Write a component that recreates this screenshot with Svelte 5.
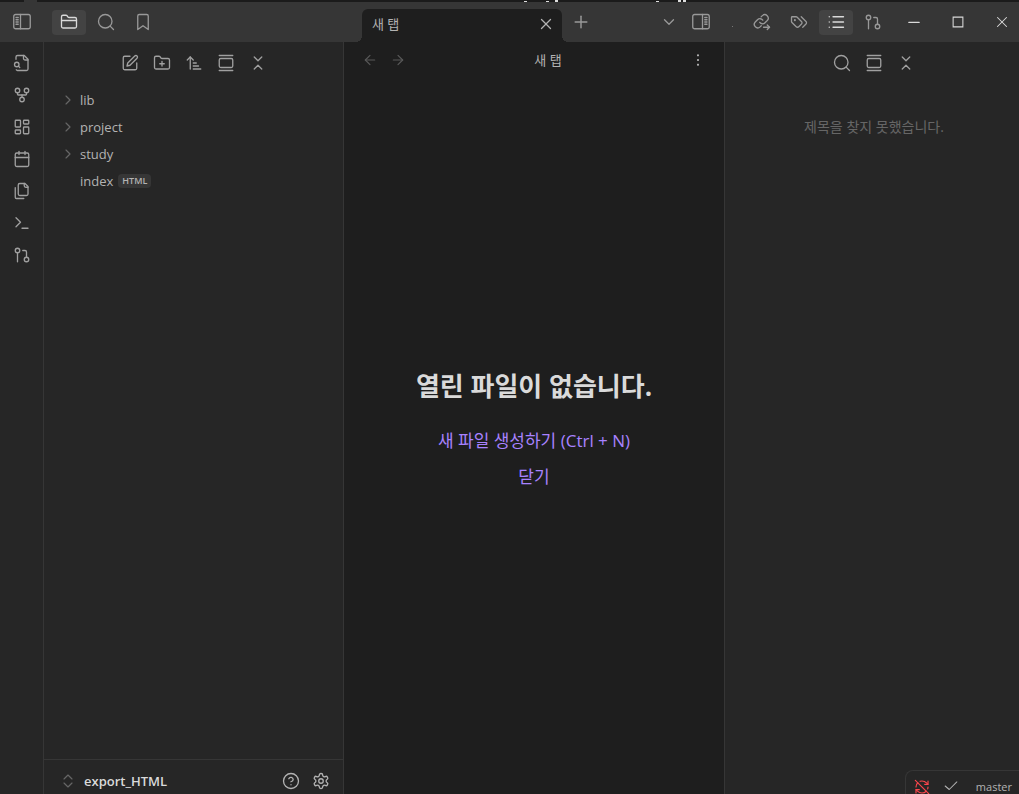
<script>
	// circles and rects are written as paths so every icon is just a list of d strings
	const folder =
		'M20 20a2 2 0 0 0 2-2V8a2 2 0 0 0-2-2h-7.9a2 2 0 0 1-1.69-.9L9.6 3.9A2 2 0 0 0 7.93 3H4a2 2 0 0 0-2 2v13a2 2 0 0 0 2 2Z';
	const circle = (x, y, r) => `M${x - r} ${y}a${r} ${r} 0 1 0 ${r * 2} 0a${r} ${r} 0 1 0 ${-r * 2} 0`;
	const rect = (x, y, w, h, r) =>
		`M${x + r} ${y}h${w - 2 * r}a${r} ${r} 0 0 1 ${r} ${r}v${h - 2 * r}a${r} ${r} 0 0 1 ${-r} ${r}h${2 * r - w}a${r} ${r} 0 0 1 ${-r} ${-r}v${2 * r - h}a${r} ${r} 0 0 1 ${r} ${-r}z`;

	const icons = {
		sidebarLeft: [rect(1, 2, 22, 19, 2.5), 'M10 2v19', 'M4 6h3M4 9h3M4 12h3M4 15h3'],
		sidebarRight: [rect(1, 2, 22, 19, 2.5), 'M14 2v19', 'M17 6h3M17 9h3M17 12h3M17 15h3'],
		folder: [folder, 'M2 10h20'],
		folderPlus: [folder, 'M12 10v6', 'M9 13h6'],
		search: [circle(11, 11, 9), 'm22 22-4.5-4.5'],
		bookmark: ['m19 22-7-5-7 5V4a2 2 0 0 1 2-2h10a2 2 0 0 1 2 2z'],
		fileSearch: [
			'M14 2v4a2 2 0 0 0 2 2h4',
			'M4.3 21a2 2 0 0 0 1.7 1h12a2 2 0 0 0 2-2V7l-5-5H6a2 2 0 0 0-2 2v3',
			'm9 18-1.5-1.5',
			circle(5, 14, 3)
		],
		fork: [circle(12, 18, 3), circle(6, 6, 3), circle(18, 6, 3), 'M18 9v2c0 .6-.4 1-1 1H7c-.6 0-1-.4-1-1V9', 'M12 12v3'],
		dashboard: [rect(3, 3, 7, 9, 1), rect(14, 3, 7, 5, 1), rect(14, 12, 7, 9, 1), rect(3, 16, 7, 5, 1)],
		calendar: ['M8 2v4', 'M16 2v4', rect(3, 4, 18, 18, 2), 'M3 10h18'],
		copy: [
			'M20 7h-3a2 2 0 0 1-2-2V2',
			'M9 18a2 2 0 0 1-2-2V4a2 2 0 0 1 2-2h7l4 4v10a2 2 0 0 1-2 2Z',
			'M3 7.6v12.8A1.6 1.6 0 0 0 4.6 22h9.8'
		],
		terminal: ['m4 17 6-6-6-6', 'M12 19h8'],
		pull: [circle(18, 18, 3), circle(6, 6, 3), 'M13 6h3a2 2 0 0 1 2 2v7', 'M6 9v12'],
		edit: [
			'M12 3H5a2 2 0 0 0-2 2v14a2 2 0 0 0 2 2h14a2 2 0 0 0 2-2v-7',
			'M18.375 2.625a2.121 2.121 0 1 1 3 3L12 15l-4 1 1-4Z'
		],
		sort: ['m3 8 4-4 4 4', 'M7 4v16', 'M11 12h4', 'M11 16h7', 'M11 20h10'],
		gallery: ['M3 2h18', rect(3, 6, 18, 12, 2), 'M3 22h18'],
		collapse: ['m7 20 5-5 5 5', 'm7 4 5 5 5-5'],
		updown: ['m6 15 6 6 6-6', 'm6 9 6-6 6 6'],
		close: ['M18 6 6 18', 'm6 6 12 12'],
		plus: ['M5 12h14', 'M12 5v14'],
		down: ['m6 9 6 6 6-6'],
		right: ['m9 18 6-6-6-6'],
		back: ['m12 19-7-7 7-7', 'M19 12H5'],
		forward: ['M5 12h14', 'm12 5 7 7-7 7'],
		more: [circle(12, 12, 0.7), circle(12, 5, 0.7), circle(12, 19, 0.7)],
		links: [
			'M9 12.5a4.6 4.6 0 0 0 7 .5l3-3a4.6 4.6 0 0 0-6.5-6.5l-1.7 1.7',
			'M13 9.5a4.6 4.6 0 0 0-7-.5l-3 3a4.6 4.6 0 0 0 6.5 6.5l1.5-1.5',
			'M14 19h8',
			'm19 16 3 3-3 3'
		],
		tags: [
			'm15 5 6.3 6.3a2.4 2.4 0 0 1 0 3.4L17 19',
			'M9.6 5.6A2 2 0 0 0 8.2 5H3a1 1 0 0 0-1 1v5.2a2 2 0 0 0 .6 1.4l5.7 5.7a2.4 2.4 0 0 0 3.4 0l3.6-3.6a2.4 2.4 0 0 0 0-3.4z',
			circle(6.5, 9.5, 0.5)
		],
		list: ['M8 5h14', 'M8 12h14', 'M8 19h14', 'M3 5h.01', 'M3 12h.01', 'M3 19h.01'],
		help: [circle(12, 12, 10), 'M9.1 9a3 3 0 0 1 5.8 1c0 2-3 3-3 3', 'M12 17h.01'],
		settings: [
			'M12.22 2h-.44a2 2 0 0 0-2 2v.18a2 2 0 0 1-1 1.73l-.43.25a2 2 0 0 1-2 0l-.15-.08a2 2 0 0 0-2.73.73l-.22.38a2 2 0 0 0 .73 2.73l.15.1a2 2 0 0 1 1 1.72v.51a2 2 0 0 1-1 1.74l-.15.09a2 2 0 0 0-.73 2.73l.22.38a2 2 0 0 0 2.73.73l.15-.08a2 2 0 0 1 2 0l.43.25a2 2 0 0 1 1 1.73V20a2 2 0 0 0 2 2h.44a2 2 0 0 0 2-2v-.18a2 2 0 0 1 1-1.73l.43-.25a2 2 0 0 1 2 0l.15.08a2 2 0 0 0 2.73-.73l.22-.39a2 2 0 0 0-.73-2.73l-.15-.08a2 2 0 0 1-1-1.74v-.5a2 2 0 0 1 1-1.74l.15-.09a2 2 0 0 0 .73-2.73l-.22-.38a2 2 0 0 0-2.73-.73l-.15.08a2 2 0 0 1-2 0l-.43-.25a2 2 0 0 1-1-1.73V4a2 2 0 0 0-2-2z',
			circle(12, 12, 3)
		],
		syncOff: [
			'M21 8l-2.26-2.26A9.75 9.75 0 0 0 12 3c-1 0-1.97.16-2.87.47',
			'M8 16H3v5',
			'M3 12c0-2.49 1-4.74 2.64-6.36',
			'm3 16 2.26 2.26A9.75 9.75 0 0 0 12 21c2.49 0 4.74-1 6.36-2.64',
			'M21 12c0 1-.16 1.97-.47 2.87',
			'M21 3v5h-5',
			'M22 22 2 2'
		],
		check: ['M22 5 9 18l-7-6'],
		minimize: ['M5 12.5h14'],
		maximize: ['M5.5 5.5h13v13h-13z']
	};

	const ribbon = ['fileSearch', 'fork', 'dashboard', 'calendar', 'copy', 'terminal', 'pull'];
	const fileActions = ['edit', 'folderPlus', 'sort', 'gallery', 'collapse'];
	const outlineActions = ['search', 'gallery', 'collapse'];
	const leftTabs = ['folder', 'search', 'bookmark'];
	const rightTabs = ['links', 'tags', 'list', 'pull'];
	const folders = ['lib', 'project', 'study'];

	let leftTab = $state('folder');
	let rightTab = $state('list');
</script>

{#snippet icon(name, size = 18)}
	<svg class="icon-{name}" width={size} height={size} viewBox="0 0 24 24" aria-hidden="true">
		{#each icons[name] as d}
			<path {d} />
		{/each}
	</svg>
{/snippet}

<div class="app">
	<!-- sliver of the window behind -->
	<svg class="behind" height="2" aria-hidden="true">
		<path class="dim" d="M24 0h13v2h-13z" />
		<path d="M524 1h3v1h-3zM546 1h3v1h-3zM555 0h3v2h-3zM656 1h3v1h-3zM678 0h3v2h-3zM683 0h3v2h-3z" />
	</svg>
	<header class="titlebar">
		<div class="title-left">
			<button class="toggle" aria-label="sidebarLeft">{@render icon('sidebarLeft')}</button>
			<div class="side-tabs">
				{#each leftTabs as name}
					<button class="side-tab" class:active={leftTab === name} aria-label={name} onclick={() => (leftTab = name)}>
						{@render icon(name)}
					</button>
				{/each}
			</div>
		</div>
		<div class="title-main">
			<div class="tab">
				<span>새 탭</span>
				<button aria-label="close">{@render icon('close')}</button>
			</div>
			<button class="new-tab" aria-label="plus">{@render icon('plus', 20)}</button>
			<div class="title-end">
				<button aria-label="down">{@render icon('down')}</button>
				<button aria-label="sidebarRight">{@render icon('sidebarRight')}</button>
			</div>
		</div>
		<div class="title-right">
			<span class="drag-dot"></span>
			<div class="side-tabs">
				{#each rightTabs as name}
					<button class="side-tab" class:active={rightTab === name} aria-label={name} onclick={() => (rightTab = name)}>
						{@render icon(name)}
					</button>
				{/each}
			</div>
			<div class="window-buttons">
				<button aria-label="minimize">{@render icon('minimize')}</button>
				<button aria-label="maximize">{@render icon('maximize')}</button>
				<button aria-label="close">{@render icon('close')}</button>
			</div>
		</div>
	</header>

	<nav class="ribbon">
		{#each ribbon as name}
			<button aria-label={name}>{@render icon(name)}</button>
		{/each}
	</nav>

	<aside class="files">
		<div class="actions">
			{#each fileActions as name}
				<button aria-label={name}>{@render icon(name)}</button>
			{/each}
		</div>
		<ul class="tree">
			{#each folders as name}
				<li><button>{@render icon('right', 16)}<span>{name}</span></button></li>
			{/each}
			<li><button class="file"><span>index</span><small>HTML</small></button></li>
		</ul>
		<footer class="vault">
			<button class="vault-name">{@render icon('updown', 16)}<span>export_HTML</span></button>
			<button aria-label="help">{@render icon('help')}</button>
			<button aria-label="settings">{@render icon('settings')}</button>
		</footer>
	</aside>

	<main>
		<div class="view-header">
			<div class="nav">
				<button aria-label="back" disabled>{@render icon('back', 16)}</button>
				<button aria-label="forward" disabled>{@render icon('forward', 16)}</button>
			</div>
			<span>새 탭</span>
			<button aria-label="more">{@render icon('more', 16)}</button>
		</div>
		<div class="empty">
			<h1>열린 파일이 없습니다.</h1>
			<button>새 파일 생성하기 (Ctrl + N)</button>
			<button>닫기</button>
		</div>
	</main>

	<aside class="outline">
		<div class="actions">
			{#each outlineActions as name}
				<button aria-label={name}>{@render icon(name)}</button>
			{/each}
		</div>
		<p>제목을 찾지 못했습니다.</p>
	</aside>

	<div class="status">
		{@render icon('syncOff', 16)}
		{@render icon('check', 14)}
		<span>master</span>
	</div>
</div>

<style>
	:global(body) {
		background: #1e1e1e;
	}
	.app {
		height: 100vh;
		overflow: hidden;
		position: relative;
		display: grid;
		grid-template-columns: 44px 300px minmax(0, 1fr) 295px;
		grid-template-rows: 2px 40px minmax(0, 1fr);
		background: #1e1e1e;
		color: #b3b3b3;
		font: 13px/20px 'Open Sans', 'Noto Sans CJK KR', sans-serif;
	}
	button {
		display: flex;
		align-items: center;
		justify-content: center;
		padding: 0;
		border: 0;
		background: none;
		color: inherit;
		font: inherit;
	}
	svg {
		display: block;
		flex: none;
		fill: none;
		stroke: currentColor;
		stroke-width: 1.75;
		stroke-linecap: round;
		stroke-linejoin: round;
	}
	.behind {
		grid-column: 1 / -1;
		width: 100%;
		background: #1b1b1b;
		fill: #ddd;
		stroke: none;
	}
	.behind .dim {
		fill: #363636;
	}

	.titlebar {
		grid-column: 1 / -1;
		display: grid;
		grid-template-columns: 344px minmax(0, 1fr) 295px;
		background: #363636;
		color: #999;
	}
	.title-left,
	.title-right {
		display: flex;
		align-items: center;
	}
	.toggle {
		width: 44px;
	}
	.side-tabs {
		display: flex;
		gap: 3px;
		margin-left: 8px;
	}
	.side-tab {
		width: 34px;
		height: 25px;
		border-radius: 4px;
	}
	.side-tab.active {
		background: #434343;
		color: #dadada;
	}
	.title-main {
		display: flex;
		align-items: center;
		padding: 0 14px 0 18px;
	}
	.tab {
		position: relative;
		box-sizing: border-box;
		width: 200px;
		height: 33px;
		display: flex;
		align-items: center;
		justify-content: space-between;
		align-self: flex-end;
		padding: 0 7px 4px 10px;
		border-radius: 6px 6px 0 0;
		background: #1e1e1e;
		color: #b3b3b3;
	}
	/* flared feet of the open tab */
	.tab::before,
	.tab::after {
		content: '';
		position: absolute;
		bottom: 0;
		width: 6px;
		height: 6px;
	}
	.tab::before {
		right: 100%;
		background: radial-gradient(circle at 0 0, transparent 6px, #1e1e1e 6px);
	}
	.tab::after {
		left: 100%;
		background: radial-gradient(circle at 100% 0, transparent 6px, #1e1e1e 6px);
	}
	.new-tab {
		margin-left: 9px;
	}
	.title-end {
		display: flex;
		align-items: center;
		gap: 14px;
		margin-left: auto;
	}
	.title-right {
		justify-content: flex-end;
	}
	.drag-dot {
		width: 1px;
		height: 1px;
		margin-top: 8px;
		background: #777;
	}
	.window-buttons {
		display: flex;
		gap: 10px;
		margin-left: 7px;
		color: #dadada;
	}
	.window-buttons button {
		width: 34px;
		height: 25px;
	}
	.window-buttons svg {
		stroke-width: 1.4;
		stroke-linejoin: miter;
	}
	.title-right .side-tabs {
		margin-left: 12px;
	}

	.ribbon {
		display: flex;
		flex-direction: column;
		align-items: center;
		gap: 6px;
		padding-top: 8px;
		border-right: 1px solid #363636;
		background: #262626;
		color: #a0a0a0;
	}
	.ribbon button,
	.actions button {
		width: 26px;
		height: 26px;
	}
	.files {
		display: flex;
		flex-direction: column;
		border-right: 1px solid #363636;
		background: #262626;
	}
	.actions {
		display: flex;
		justify-content: center;
		gap: 6px;
		padding: 8px 0;
		color: #a0a0a0;
	}
	.tree {
		flex: 1;
		margin: 0;
		padding: 2px 12px;
		list-style: none;
	}
	.tree button {
		gap: 4px;
		height: 27px;
		padding-left: 4px;
	}
	.tree .file {
		gap: 5px;
		padding-left: 24px;
	}
	.tree svg,
	.icon-updown {
		color: #666;
	}
	small {
		padding: 0 4px;
		border-radius: 4px;
		background: #363636;
		font-size: 9px;
		line-height: 14px;
		font-weight: 600;
	}
	.vault {
		display: flex;
		align-items: center;
		gap: 12px;
		height: 35px;
		padding: 8px 13px 0 16px;
		box-sizing: border-box;
		border-top: 1px solid #363636;
	}
	.vault-name {
		gap: 8px;
		margin-right: auto;
		color: #dadada;
		font-weight: 600;
	}

	main {
		display: flex;
		flex-direction: column;
	}
	.view-header {
		display: flex;
		align-items: center;
		height: 36px;
		padding: 0 18px;
	}
	.view-header span {
		flex: 1;
		text-align: center;
	}
	.nav {
		display: flex;
		gap: 12px;
		color: #595959;
	}
	.empty {
		flex: 1;
		display: flex;
		flex-direction: column;
		align-items: center;
		justify-content: center;
		gap: 12px;
		padding-bottom: 16px;
		font-size: 17px;
		line-height: 24px;
	}
	h1 {
		margin: 0 0 13px;
		color: #dadada;
		font-size: 26px;
		line-height: 36px;
		font-weight: 700;
	}
	.empty button {
		color: #a882ff;
	}

	.outline {
		padding-left: 4px;
		border-left: 1px solid #363636;
		background: #262626;
	}
	.outline p {
		margin: 33px 0 0;
		color: #666;
		font-size: 14px;
		text-align: center;
	}
	.status {
		position: absolute;
		right: 0;
		bottom: 0;
		box-sizing: border-box;
		height: 24px;
		display: flex;
		align-items: flex-start;
		gap: 14px;
		overflow: hidden;
		padding: 8px 7px 0 8px;
		border: 1px solid #363636;
		border-width: 1px 0 0 1px;
		border-radius: 8px 0 0 0;
		background: #262626;
		font-size: 11px;
		line-height: 15px;
	}
	.status span {
		margin-left: 4px;
	}
	.icon-syncOff {
		color: #fb464c;
	}
</style>
